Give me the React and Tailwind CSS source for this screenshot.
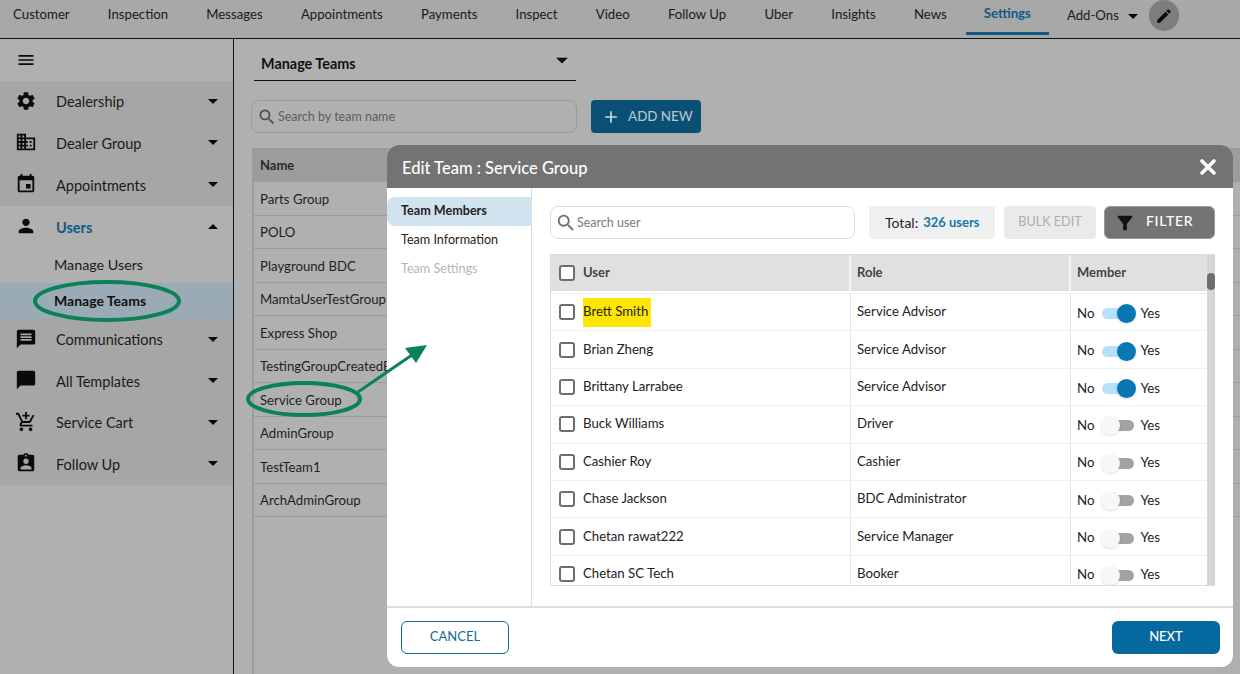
import {
    MdAdd,
    MdAddShoppingCart,
    MdArrowDropDown,
    MdArrowDropUp,
    MdAssignmentInd,
    MdChatBubble,
    MdDomain,
    MdEdit,
    MdEvent,
    MdFilterAlt,
    MdMenu,
    MdMessage,
    MdPerson,
    MdSearch,
    MdSettings,
} from "react-icons/md";
import { X } from "lucide-react";

const tabs = ["Customer", "Inspection", "Messages", "Appointments", "Payments", "Inspect", "Video", "Follow Up", "Uber", "Insights", "News"];

const teams = ["Parts Group", "POLO", "Playground BDC", "MamtaUserTestGroup", "Express Shop", "TestingGroupCreatedByAdmin", "Service Group", "AdminGroup", "TestTeam1", "ArchAdminGroup"];

const users = [
    { name: "Brett Smith", role: "Service Advisor", member: true, highlight: true },
    { name: "Brian Zheng", role: "Service Advisor", member: true },
    { name: "Brittany Larrabee", role: "Service Advisor", member: true },
    { name: "Buck Williams", role: "Driver" },
    { name: "Cashier Roy", role: "Cashier" },
    { name: "Chase Jackson", role: "BDC Administrator" },
    { name: "Chetan rawat222", role: "Service Manager" },
    { name: "Chetan SC Tech", role: "Booker" },
];

function SideItem({ icon: Icon, label, active, height = "h-[41.67px]" }) {
    return (
        <div className={`flex items-center ${height}`}>
            <Icon className="ml-[15px] -mt-[2px] w-[22px] h-[22px] text-[#0a0a0a] shrink-0" />
            <span className={`ml-[19px] pt-[1px] text-[14.5px] ${active ? "font-bold text-[#0f5c85]" : "text-[#1a1a1a]"}`}>{label}</span>
            {active ? (
                <MdArrowDropUp className="ml-auto mr-[8px] w-6 h-6 text-[#0a0a0a]" />
            ) : (
                <MdArrowDropDown className="ml-auto mr-[8px] -mt-[2px] w-6 h-6 text-[#0a0a0a]" />
            )}
        </div>
    );
}

function Checkbox() {
    return <span className="block w-4 h-4 rounded-[3px] border-2 border-[#6e6e6e] bg-white shrink-0" />;
}

function Toggle({ on }) {
    return (
        <div className="flex items-center pt-[3px] text-[13.3px] text-[#222]">
            <span>No</span>
            <span className="relative ml-[7px] mr-[7px] block w-8 h-[11px] rounded-full">
                <span className={`block w-8 h-[11px] rounded-full ${on ? "bg-[#b5e1fa]" : "bg-[#a3a3a3]"}`} />
                <span className={`absolute top-[-4px] w-[19px] h-[19px] rounded-full shadow ${on ? "left-[15px] bg-[#0a77b5]" : "left-[-1px] bg-[#f7f7f7]"}`} />
            </span>
            <span>Yes</span>
        </div>
    );
}

function EditTeamModal() {
    return (
        <div className="absolute left-[387px] top-[145px] w-[846px] h-[522px] flex flex-col bg-white rounded-xl overflow-hidden">
            <div className="flex items-center justify-between h-[43px] pl-[15px] pr-[13px] bg-[#737373] text-white shrink-0">
                <span className="pt-[3px] text-[16.5px] font-medium">Edit Team : Service Group</span>
                <X size={24} strokeWidth={3.6} />
            </div>
            <div className="flex flex-1 min-h-0">
                <div className="w-[145px] pt-[9px] border-r border-[#dedede] shrink-0 text-[12.6px]">
                    <div className="flex items-center h-[29px] pl-[14px] rounded-l-lg bg-[#d2e3f0] font-bold text-[#222]">Team Members</div>
                    <div className="flex items-center h-[29px] pl-[14px] text-[#222]">Team Information</div>
                    <div className="flex items-center h-[29px] pl-[14px] text-[#b5b5b5]">Team Settings</div>
                </div>
                <div className="flex-1 pl-[18px] pr-[18px] pt-[18px]">
                    <div className="flex items-center h-[33px]">
                        <div className="flex items-center w-[305px] h-[33px] pl-1 rounded-lg border border-[#dcdcdc] text-[12.5px] text-[#7a7a7a]">
                            <MdSearch className="w-[22px] h-[22px] text-[#6e6e6e]" />
                            <span className="pt-[1px]">Search user</span>
                        </div>
                        <div className="flex items-center ml-[14px] w-[126px] h-[33px] pl-[16px] bg-[#f0f0f0] text-sm text-[#222]">
                            Total:
                            <span className="ml-[5px] font-bold text-[13px] text-[#1476ad]">326 users</span>
                        </div>
                        <div className="flex items-center justify-center ml-[9px] w-[92px] h-[33px] rounded bg-[#eaeaea] text-[12.6px] text-[#adadad]">BULK EDIT</div>
                        <div className="flex items-center ml-[8px] w-[111px] h-[33px] pl-[9px] rounded-md border border-[#9a9a9a] bg-[#737373] text-sm font-medium tracking-wider text-white">
                            <MdFilterAlt className="w-[22px] h-[22px] text-[#111]" />
                            <span className="ml-[10px] pb-[3px]">FILTER</span>
                        </div>
                    </div>
                    <div className="flex mt-[15px] h-[332px] border border-[#dcdcdc] border-r-0 overflow-hidden">
                        <div className="flex-1 min-w-0">
                            <div className="flex h-[36px] bg-[#e0e0e0] text-[13px] font-bold text-[#444]">
                                <div className="flex items-center gap-2 w-[300px] pl-2 border-r-2 border-[#f4f4f4]">
                                    <Checkbox />
                                    <span>User</span>
                                </div>
                                <div className="flex items-center w-[220px] pl-[6px] border-r-2 border-[#f4f4f4]">Role</div>
                                <div className="flex items-center flex-1 pl-[6px]">Member</div>
                            </div>
                            <div className="pt-[2px]">
                                {users.map((user) => (
                                    <div key={user.name} className="flex h-[37.4px] border-t border-[#efefef] text-[13.2px] text-[#222]">
                                        <div className="flex items-center gap-2 w-[300px] pl-2 border-r border-[#e6e6e6]">
                                            <Checkbox />
                                            <span className={`whitespace-nowrap ${user.highlight ? "flex items-center h-[29px] w-[68px] bg-[#ffe600]" : ""}`}>{user.name}</span>
                                        </div>
                                        <div className="flex items-center w-[220px] pl-[6px] border-r border-[#e6e6e6]">{user.role}</div>
                                        <div className="flex items-center flex-1 pl-[6px]">
                                            <Toggle on={user.member} />
                                        </div>
                                    </div>
                                ))}
                            </div>
                        </div>
                        <div className="w-[8px] bg-[#d6d6d6] shrink-0 pt-[18px]">
                            <div className="h-[17px] rounded-sm bg-[#6e6e6e]" />
                        </div>
                    </div>
                </div>
            </div>
            <div className="flex items-center justify-between h-[61px] pl-[14px] pr-[13px] border-t-2 border-[#dcdcdc] shrink-0 text-[13px]">
                <div className="flex items-center justify-center w-[108px] h-[33px] pb-[1px] rounded-md border border-[#0f6a9c] text-[#0f6a9c]">CANCEL</div>
                <div className="flex items-center justify-center w-[108px] h-[33px] pb-[1px] rounded-md bg-[#05689e] font-medium text-white">NEXT</div>
            </div>
        </div>
    );
}

export default function App() {
    return (
        <div className="relative w-[1240px] h-[674px] overflow-hidden bg-[#b0b0b0] text-[#1a1a1a] font-['Lato','Noto_Sans',sans-serif]">
            {/* top tabs */}
            <div className="flex items-start h-[38px] bg-[#a8a8a8] text-[13.2px] text-[#1a1a1a]">
                <div className="flex h-[35px] -ml-[6px]">
                    {tabs.map((tab) => (
                        <div key={tab} className="flex items-center px-[19.1px] h-[29px]">{tab}</div>
                    ))}
                    <div className="flex items-center px-[18px] h-[35px] border-b-[3px] border-[#0f5c85] pb-[4px] font-bold text-[#0f5c85]">Settings</div>
                </div>
                <div className="flex items-center h-[32px] ml-[18px]">
                    Add-Ons
                    <MdArrowDropDown className="ml-[2px] w-6 h-6 text-[#0a0a0a]" />
                </div>
                <div className="flex items-center justify-center ml-[4px] w-[30px] h-[31px] rounded-full bg-[#7d7d7d]">
                    <MdEdit className="w-[18px] h-[18px] text-[#0a0a0a]" />
                </div>
            </div>

            <div className="flex h-[636px] border-t border-[#111]">
                {/* sidebar */}
                <div className="w-[234px] shrink-0 border-r border-[#111]">
                    <div className="flex items-center h-[42px] pl-[16px]">
                        <MdMenu className="w-[20px] h-[20px] text-[#0a0a0a]" />
                    </div>
                    <div className="bg-[#a6a6a6]">
                        <SideItem icon={MdSettings} label="Dealership" />
                        <SideItem icon={MdDomain} label="Dealer Group" />
                        <SideItem icon={MdEvent} label="Appointments" />
                    </div>
                    <SideItem icon={MdPerson} label="Users" active height="h-[42px]" />
                    <div className="flex items-center h-[35px] pb-[1px] pl-[54px] text-[14.3px] text-[#1a1a1a]">Manage Users</div>
                    <div className="flex items-center h-[36px] pl-[54px] bg-[#9aabb5] text-sm font-bold text-[#111]">Manage Teams</div>
                    <div className="bg-[#a6a6a6]">
                        <SideItem icon={MdMessage} label="Communications" height="h-[41.5px]" />
                        <SideItem icon={MdChatBubble} label="All Templates" height="h-[41.5px]" />
                        <SideItem icon={MdAddShoppingCart} label="Service Cart" height="h-[41.5px]" />
                        <SideItem icon={MdAssignmentInd} label="Follow Up" height="h-[41.5px]" />
                    </div>
                </div>

                {/* manage teams page */}
                <div className="flex-1 pl-[17px] min-w-0">
                    <div className="flex items-center justify-between w-[322px] h-[42px] ml-[3px] pl-[7px] pt-[8px] border-b border-[#111] text-[14.4px] font-bold text-[#111]">
                        Manage Teams
                        <MdArrowDropDown className="-mt-[8px] w-7 h-7 text-[#0a0a0a]" />
                    </div>
                    <div className="flex mt-[19px] h-[33px]">
                        <div className="flex items-center w-[326px] pl-[5px] rounded-lg border border-[#9c9c9c] text-[12.5px] text-[#5e5e5e]">
                            <MdSearch className="w-[20px] h-[20px] text-[#4a4a4a]" />
                            <span className="ml-[1px] pt-[1px]">Search by team name</span>
                        </div>
                        <div className="flex items-center ml-[14px] w-[110px] rounded bg-[#0a4f74] pl-[10px] text-[13.4px] font-medium text-[#b5c4cc]">
                            <MdAdd className="w-[20px] h-[20px] text-[#d0d8dc]" />
                            <span className="ml-[7px]">ADD NEW</span>
                        </div>
                    </div>
                    <div className="ml-px mt-[15px] h-[540px] border-l-2 border-[#9c9c9c]">
                        <div className="flex items-center h-[34px] pl-[6px] pt-[1px] bg-[#9c9c9c] text-[13px] font-bold text-[#2a2a2a]">Name</div>
                        {teams.map((team) => (
                            <div key={team} className="flex items-center h-[33.5px] pl-[6px] pt-[3px] border-b border-[#9c9c9c] text-[13.2px] text-[#1f1f1f] whitespace-nowrap">{team}</div>
                        ))}
                    </div>
                </div>
            </div>

            <EditTeamModal />

            {/* green annotations drawn over the screenshot */}
            <svg className="absolute inset-0 pointer-events-none" width="1240" height="674" fill="none">
                <ellipse cx="107" cy="301" rx="72" ry="19" stroke="#0a8158" strokeWidth="4" />
                <ellipse cx="304" cy="399" rx="56" ry="16" stroke="#0a8158" strokeWidth="4" />
                <path d="M358 392 L412 355" stroke="#0a8158" strokeWidth="3" />
                <path d="M427 345 L405 348 L416 363 Z" fill="#0a8158" />
            </svg>
        </div>
    );
}
